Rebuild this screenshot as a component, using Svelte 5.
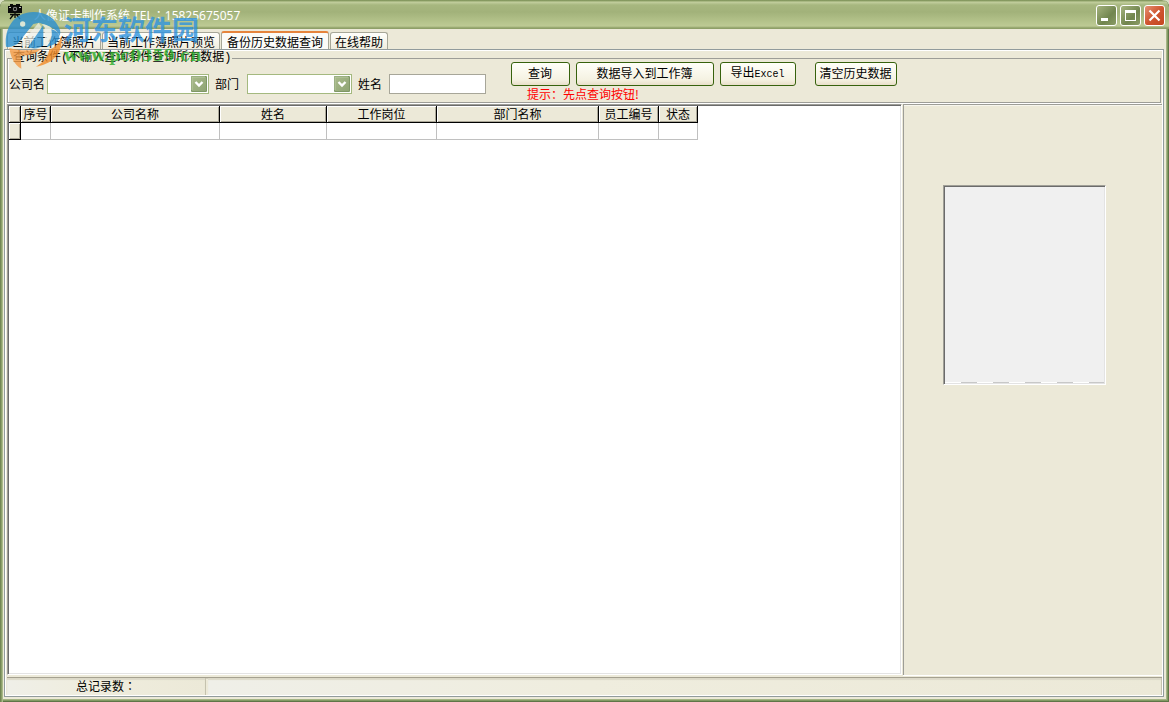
<script lang="ts">
	const tabs = ['当前工作簿照片', '当前工作簿照片预览', '备份历史数据查询', '在线帮助'];
	let current = $state(2);

	const columns: [string, number][] = [
		['序号', 30],
		['公司名称', 169],
		['姓名', 107],
		['工作岗位', 110],
		['部门名称', 162],
		['员工编号', 60],
		['状态', 39]
	];

	let company = $state('');
	let dept = $state('');
	let name = $state('');
</script>

{#snippet arrow()}
	<svg class="arrow" width="16" height="16" viewBox="0 0 16 16" aria-hidden="true">
		<rect width="16" height="16" rx="1" fill="#7f9766" />
		<rect x="1" y="1" width="14" height="14" fill="url(#knob)" />
		<path d="M1 14V1H14" fill="none" stroke="#b9c9a0" />
		<path d="M4.5 6L8 9.5L11.5 6" fill="none" stroke="#fff" stroke-width="2.4" />
	</svg>
{/snippet}

<div class="window">
	<svg class="defs" width="0" height="0" aria-hidden="true">
		<defs>
			<linearGradient id="knob" x1="0" y1="0" x2="1" y2="1">
				<stop offset="0" stop-color="#a9ba8b" />
				<stop offset="1" stop-color="#8fa574" />
			</linearGradient>
		</defs>
	</svg>

	<header class="titlebar">
		<svg class="app-icon" width="16" height="16" viewBox="0 0 16 16" aria-hidden="true">
			<path d="M1 2h2V0h3v1h3V0h4v2h2v7H1z" fill="#0a0a0a" />
			<circle cx="8" cy="5" r="2.2" fill="#888" />
			<circle cx="8" cy="5" r="1.2" fill="#111" />
			<path d="M2 3.5h2M12 3.5h2" stroke="#bbb" />
			<path d="M3 10.500h10M8 9v5M7 10L3 15M9 10l4 5" stroke="#0a0a0a" stroke-width="1.3" />
		</svg>
		<h1>人像证卡制作系统 TEL<span class="colon">：</span>15825675057</h1>
		<div class="caption">
			<button type="button" aria-label="最小化">
				<svg width="19" height="19" viewBox="0 0 19 19"><path d="M4 12h7v3H4z" fill="#fff" /></svg>
			</button>
			<button type="button" aria-label="最大化">
				<svg width="19" height="19" viewBox="0 0 19 19">
					<path d="M4 4h11v11H4zM5 7v7h9V7z" fill="#fff" fill-rule="evenodd" />
				</svg>
			</button>
			<button type="button" class="close" aria-label="关闭">
				<svg width="19" height="19" viewBox="0 0 19 19">
					<path d="M4.5 4.5l10 10M14.5 4.5l-10 10" stroke="#fff" stroke-width="2.2" />
				</svg>
			</button>
		</div>
	</header>

	<nav class="tabs" role="tablist">
		{#each tabs as tab, i (tab)}
			<button
				type="button"
				role="tab"
				class="tab"
				class:active={i === current}
				aria-selected={i === current}
				onclick={() => (current = i)}>{tab}</button
			>
		{/each}
	</nav>

	<main class="page">
		<fieldset>
			<legend>查询条件(不输入查询条件查询所有数据)</legend>
			<div class="filters">
				<div class="fields">
					<label for="company">公司名</label>
					<span class="combo company">
						<select id="company" bind:value={company}><option value=""></option></select>
						{@render arrow()}
					</span>
					<label for="dept">部门</label>
					<span class="combo dept">
						<select id="dept" bind:value={dept}><option value=""></option></select>
						{@render arrow()}
					</span>
					<label for="name">姓名</label>
					<input id="name" type="text" bind:value={name} />
				</div>
				<div class="actions">
					<div class="buttons">
						<button type="button" class="btn query">查询</button>
						<button type="button" class="btn import">数据导入到工作簿</button>
						<button type="button" class="btn export">导出<span class="mono">Excel</span></button>
						<button type="button" class="btn clear">清空历史数据</button>
					</div>
					<p class="hint">提示：先点查询按钮!</p>
				</div>
			</div>
		</fieldset>

		<div class="body">
			<div class="grid">
				<table>
					<thead>
						<tr>
							<th class="mark"></th>
							{#each columns as [label, width] (label)}
								<th style="width: {width}px">{label}</th>
							{/each}
						</tr>
					</thead>
					<tbody>
						<tr>
							<th class="mark"></th>
							{#each columns as [label] (label)}
								<td></td>
							{/each}
						</tr>
					</tbody>
				</table>
			</div>
			<aside>
				<div class="photo"></div>
			</aside>
		</div>

		<footer>
			<div class="total">总记录数<span class="colon">：</span></div>
			<div class="rest"></div>
		</footer>
	</main>

	<div class="watermark">
		<svg width="60" height="60" viewBox="12 30 180 180" aria-hidden="true">
			<path
				d="M18 140C12 86 42 36 100 36C140 36 168 56 180 90C182 100 180 104 178 108C174 96 166 88 150 80C140 76 128 72 118 68L100 72L52 132C40 140 28 142 18 140z"
				fill="#2a8fd0"
			/>
			<path d="M56 138L116 68L126 84L86 140z" fill="#eff1e8" fill-opacity="0.9" />
			<path d="M84 142L124 84L130 74V136C120 146 100 148 84 142z" fill="#2f93d2" />
			<path d="M126 72C150 76 164 88 160 104C158 118 152 128 146 136L134 138V82z" fill="#eff1e8" />
			<path d="M140 140C154 124 158 108 154 88C170 92 178 102 178 112C174 128 160 138 140 140z" fill="#2a8fd0" />
			<circle cx="68" cy="72" r="8" fill="#e6efe8" />
			<path d="M28 144C56 152 88 154 124 146C112 160 84 168 62 166L64 206C44 196 32 172 28 144z" fill="#f49a44" />
			<path d="M184 108C190 150 168 190 108 200C132 186 144 170 148 148C164 144 178 130 184 108z" fill="#f28c28" />
		</svg>
		<div class="words">
			<span class="site">河东软件园</span>
			<span class="url">www.pc0359.cn</span>
		</div>
	</div>
</div>

<style>
	:global(body) {
		margin: 0;
		background: #d9dfc4;
	}

	.window {
		position: relative;
		box-sizing: border-box;
		height: 100vh;
		display: flex;
		flex-direction: column;
		padding: 0 4px 4px;
		border-radius: 7px 7px 0 0;
		background: #ece9d8;
		box-shadow:
			inset 1px 0 #728655,
			inset 2px 0 #8b9f69,
			inset 3px 0 #a9b98a,
			inset -1px -1px #5f7547,
			inset -2px -2px #839a64,
			inset -3px -3px #a5b585;
		font-family: 'Noto Sans CJK SC', sans-serif;
		font-size: 12px;
		line-height: 16px;
		color: #000;
		overflow: hidden;
	}

	.defs {
		position: absolute;
	}

	button,
	input,
	select {
		font: inherit;
		color: inherit;
	}

	.titlebar {
		display: flex;
		align-items: center;
		height: 29px;
		flex: none;
		margin: 0 -4px;
		padding: 0 4px 0 7px;
		box-sizing: border-box;
		border-radius: 7px 7px 0 0;
		background: linear-gradient(
			#7d915a 0,
			#8fa267 1px,
			#c3cf9f 2px,
			#a7b77f 5px,
			#a2b27a 12px,
			#b1c088 20px,
			#bdca94 26px,
			#8e9f68 28px,
			#8e9f68 29px
		);
	}

	.app-icon {
		margin-bottom: 6px;
	}

	h1 {
		margin: 2px auto 0 11px;
		font-family: 'Noto Sans', 'Noto Sans CJK SC', sans-serif;
		font-size: 12px;
		font-weight: 400;
		color: #fff;
	}

	/* the TC face centres the full-width colon */
	.colon {
		font-family: 'Noto Sans CJK TC', sans-serif;
	}

	.caption {
		display: flex;
		gap: 3px;
		padding-top: 2px;
	}

	.caption button {
		width: 21px;
		height: 21px;
		padding: 0;
		border: 1px solid #fff;
		border-radius: 3px;
		background: linear-gradient(135deg, #a5b37f, #71854e 60%, #8b9c66);
	}

	.caption button.close {
		background: linear-gradient(135deg, #e69174, #cf5530 50%, #c4471f);
	}

	.caption svg {
		display: block;
	}

	.tabs {
		display: flex;
		align-items: flex-end;
		flex: none;
		gap: 1px;
		height: 20px;
		padding-left: 3px;
	}

	.tab {
		height: 17px;
		padding: 0 4px;
		border: 1px solid #a7a798;
		border-width: 1px 1px 0;
		border-radius: 3px 3px 0 0;
		background: linear-gradient(#fffffb, #efecdd);
		line-height: 15px;
		white-space: nowrap;
	}

	.tab.active {
		height: 18px;
		padding: 0 5px;
		border-top: 2px solid #e5843c;
		background: #fbfbf8;
	}

	.page {
		flex: 1;
		min-height: 0;
		display: flex;
		flex-direction: column;
		padding: 1px 1px 0 2px;
		margin: 0 1px 1px 0;
		border: 1px solid #919b9c;
		box-shadow: inset 1px 1px #fff, inset -1px -1px #fff;
	}

	fieldset {
		flex: none;
		min-width: 0;
		margin: 3px 1px 0 0;
		padding: 0;
		border: 1px solid #9d9d97;
		box-shadow: inset 1px 0 #fff, 0 1px #fff;
	}

	legend {
		margin-left: 4px;
		padding: 0 1px;
		font-family: 'Liberation Mono', 'Noto Sans CJK SC', monospace;
		line-height: 8px;
	}

	.filters {
		display: flex;
		align-items: flex-start;
	}

	.fields {
		display: flex;
		align-items: center;
		padding: 12px 0 0 1px;
	}

	label {
		white-space: nowrap;
	}

	.combo {
		position: relative;
		display: flex;
		margin: 0 6px 0 2px;
	}

	.combo.dept {
		margin-left: 8px;
	}

	select {
		appearance: none;
		width: 100%;
		height: 20px;
		padding: 0 18px 0 3px;
		border: 1px solid #a4b97f;
		border-radius: 0;
		background: #fff;
	}

	.company {
		width: 162px;
	}

	.dept {
		width: 105px;
	}

	.arrow {
		position: absolute;
		top: 2px;
		right: 2px;
		pointer-events: none;
	}

	input {
		box-sizing: border-box;
		width: 97px;
		height: 20px;
		margin-left: 7px;
		padding: 0 3px;
		border: 1px solid #a7a699;
		background: #fff;
	}

	.actions {
		margin-left: 25px;
	}

	.buttons {
		display: flex;
		gap: 6px;
	}

	.btn {
		height: 24px;
		padding: 0 1px 2px 0;
		border: 1px solid #37620d;
		border-radius: 3px;
		background: linear-gradient(#fffff9, #f5f2e2 75%, #e9dfca);
		white-space: nowrap;
	}

	.query {
		width: 59px;
	}

	.import {
		width: 138px;
	}

	.export {
		width: 76px;
	}

	.clear {
		width: 82px;
		margin-left: 13px;
	}

	.mono {
		font-family: 'Liberation Mono', monospace;
		font-size: 10px;
	}

	.hint {
		margin: 0 0 0 16px;
		line-height: 16px;
		color: #f00;
	}

	.body {
		flex: 1;
		min-height: 0;
		display: flex;
		margin-top: 1px;
	}

	.grid {
		flex: 1;
		overflow: hidden;
		border: 1px solid #9d9d97;
		border-right-color: #fff;
		border-bottom-color: #fff;
		box-shadow: inset 1px 1px #6b6b6b, inset -1px -1px #e3e3e3;
		padding: 1px;
		background: #fff;
	}

	table {
		table-layout: fixed;
		width: 689px;
		border-collapse: separate;
		border-spacing: 0;
	}

	th,
	td {
		box-sizing: border-box;
		height: 17px;
		padding: 0;
	}

	th {
		border-right: 1px solid #000;
		border-bottom: 1px solid #000;
		background: #ece9d8;
		box-shadow: inset 1px 1px #fff, inset -1px -1px #aca899;
		font-weight: 400;
		line-height: 16px;
		white-space: nowrap;
	}

	.mark {
		width: 12px;
	}

	td {
		border-right: 1px solid #c0c0c0;
		border-bottom: 1px solid #c0c0c0;
	}

	aside {
		width: 259px;
		box-sizing: border-box;
		margin-left: 1px;
		border: 1px solid #9d9d97;
		border-width: 1px 0 0 1px;
		box-shadow: inset 0 1px #f7f6ee, 0 1px #fff;
	}

	/* sunken frame with a dashed strip along the lower edge */
	.photo {
		width: 159px;
		height: 196px;
		margin: 80px 0 0 39px;
		border: 1px solid #a09f97;
		border-right-color: #fff;
		border-bottom-color: #fff;
		padding: 1px;
		box-shadow: inset 1px 1px #6b6b6b, inset -1px -1px #e3e3e3;
		background:
			repeating-linear-gradient(90deg, #fff 0 16px, #c8c8c8 16px 32px) 0 100% / 100% 1px no-repeat content-box,
			#f0f0f0;
	}

	footer {
		flex: none;
		display: flex;
		gap: 2px;
		height: 17px;
		margin: 2px 0 1px;
		border-top: 1px solid #a5a190;
		box-shadow: inset 0 1px #d3cfbf;
	}

	footer div {
		border-right: 1px solid #c5c2ae;
		background: linear-gradient(90deg, #efefe8, #efedde 40%, #ece9d8);
		box-shadow: inset 0 2px 1px #dcd9c8;
	}

	.total {
		width: 198px;
		line-height: 15px;
		text-align: center;
	}

	.rest {
		flex: 1;
	}

	.watermark {
		position: absolute;
		top: 10px;
		left: 4px;
		display: flex;
		pointer-events: none;
		opacity: 0.8;
	}

	.words {
		display: flex;
		flex-direction: column;
		padding-top: 4px;
	}

	.site {
		font-size: 27px;
		font-weight: 700;
		line-height: 30px;
		color: #2f93de;
	}

	.url {
		font-family: 'DejaVu Serif', serif;
		font-size: 16px;
		font-weight: 700;
		line-height: 24px;
		color: #2fae2c;
	}
</style>
